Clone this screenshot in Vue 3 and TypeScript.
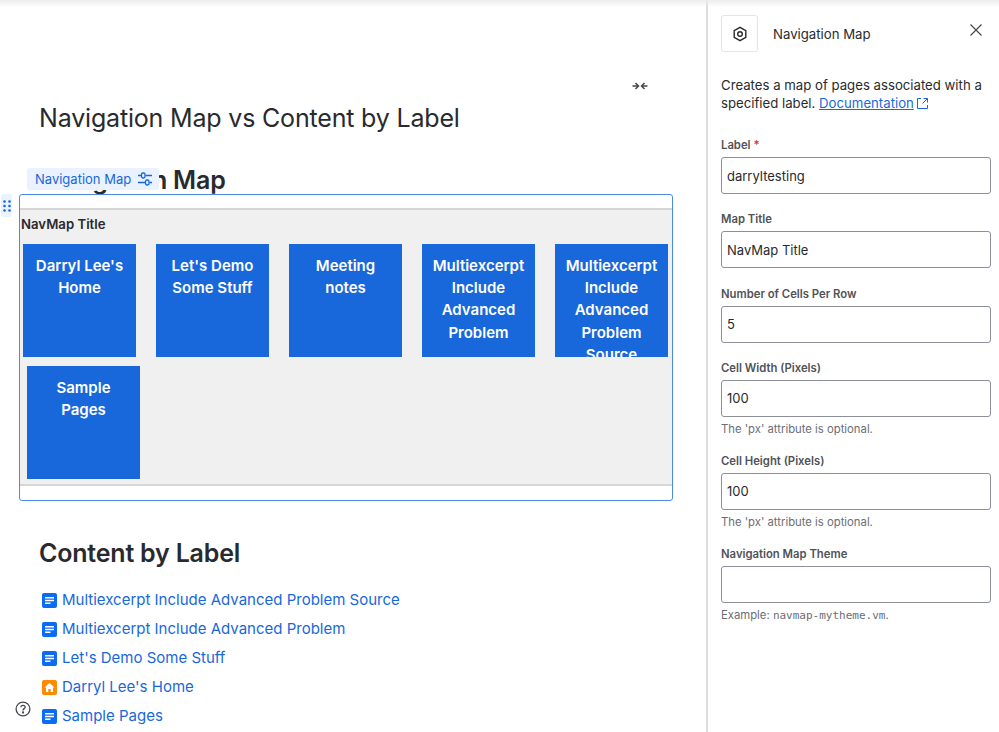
<template>
  <div class="page">
    <main class="content">
      <div class="width-row">
        <button class="icon-btn" aria-label="Collapse width">
          <svg width="16" height="10" viewBox="0 0 16 10" fill="none" stroke="#44494f" stroke-width="1.5">
            <path d="M0.5 5H6M3.5 2L6.5 5L3.5 8M15.5 5H10M12.5 2L9.5 5L12.5 8" />
          </svg>
        </button>
      </div>
      <h1>Navigation Map vs Content by Label</h1>
      <h2 class="map-heading">Navigation Map</h2>

      <section class="macro">
        <div class="macro-toolbar">
          <span>Navigation Map</span>
          <svg width="16" height="14" viewBox="0 0 16 14" fill="none" stroke="#1868db" stroke-width="1.3">
            <path d="M1 3.5H4.5M8.5 3.5H15M1 10.5H8.5M12.5 10.5H15" />
            <rect x="4.5" y="1" width="3.5" height="5" rx="1.4" />
            <rect x="8.5" y="8" width="3.5" height="5" rx="1.4" />
          </svg>
        </div>
        <div class="drag-handle">
          <svg width="8" height="12" viewBox="0 0 8 12" fill="#1868db">
            <circle v-for="d in dots" :key="d.id" :cx="d.x" :cy="d.y" r="1.3" />
          </svg>
        </div>
        <div class="map">
          <div class="map-title">NavMap Title</div>
          <div v-for="(row, i) in rows" :key="i" class="cell-row" :class="{ second: i === 1 }">
            <a v-for="cell in row" :key="cell" class="cell">{{ cell }}</a>
          </div>
        </div>
      </section>

      <h2 class="label-heading">Content by Label</h2>
      <ul class="pages">
        <li v-for="p in pages" :key="p.title">
          <svg v-if="p.home" width="15" height="15" viewBox="0 0 15 15">
            <rect width="15" height="15" rx="2" fill="#ff8b00" />
            <path d="M7.5 3L12.5 7.6H11V12H8.7V9H6.3V12H4V7.6H2.5Z" fill="#fff" />
          </svg>
          <svg v-else width="15" height="15" viewBox="0 0 15 15">
            <rect width="15" height="15" rx="2" fill="#0b6bf5" />
            <path d="M3 4H12V5.4H3ZM3 6.8H12V8.2H3ZM3 9.6H8.5V11H3Z" fill="#fff" />
          </svg>
          <a>{{ p.title }}</a>
        </li>
      </ul>
      <div class="help">
        <svg width="16" height="16" viewBox="0 0 16 16" fill="none" stroke="#44494f" stroke-width="1.3">
          <circle cx="8" cy="8" r="6.9" />
          <path d="M5.9 6.3C5.9 5 6.9 4.3 8 4.3C9.2 4.3 10.1 5.1 10.1 6.2C10.1 7.6 8 7.7 8 9.4" />
          <circle cx="8" cy="11.5" r="0.5" fill="#44494f" />
        </svg>
      </div>
    </main>

    <aside class="panel">
      <header class="panel-head">
        <div class="macro-icon">
          <svg width="16" height="16" viewBox="0 0 16 16" fill="none" stroke="#292a2e" stroke-width="1.4">
            <path d="M8 1.3L13.8 4.6V11.4L8 14.7L2.2 11.4V4.6Z" stroke-linejoin="round" />
            <circle cx="8" cy="8" r="2.3" />
          </svg>
        </div>
        <span class="panel-title">Navigation Map</span>
        <button class="close" aria-label="Close">
          <svg width="12" height="12" viewBox="0 0 12 12" stroke="#44494f" stroke-width="1.2">
            <path d="M0.5 0.5L11.5 11.5M11.5 0.5L0.5 11.5" />
          </svg>
        </button>
      </header>
      <p class="desc">
        Creates a map of pages associated with a specified label.
        <a class="doc">Documentation</a>
        <svg class="ext" width="13" height="13" viewBox="0 0 13 13" fill="none" stroke="#1868db" stroke-width="1">
          <path d="M5 1.5H1.5V11.5H11.5V8M7.5 1.5H11.5V5.5M11.5 1.5L6.5 6.5" />
        </svg>
      </p>
      <div v-for="f in fields" :key="f.label" class="field">
        <label>{{ f.label }}<span v-if="f.required" class="req">*</span></label>
        <input type="text" :value="f.value" />
        <p v-if="f.help" class="help-text">{{ f.help }}</p>
        <p v-if="f.mono" class="help-text">Example: <code>navmap-mytheme.vm</code>.</p>
      </div>
    </aside>
  </div>
</template>

<script setup lang="ts">
interface Field {
  label: string
  value: string
  required?: boolean
  help?: string
  mono?: boolean
}

const rows: string[][] = [
  [
    "Darryl Lee's Home",
    "Let's Demo Some Stuff",
    'Meeting notes',
    'Multiexcerpt Include Advanced Problem',
    'Multiexcerpt Include Advanced Problem Source',
  ],
  ['Sample Pages'],
]

const pages = [
  { title: 'Multiexcerpt Include Advanced Problem Source' },
  { title: 'Multiexcerpt Include Advanced Problem' },
  { title: "Let's Demo Some Stuff" },
  { title: "Darryl Lee's Home", home: true },
  { title: 'Sample Pages' },
]

const pxHelp = "The 'px' attribute is optional."

const fields: Field[] = [
  { label: 'Label', value: 'darryltesting', required: true },
  { label: 'Map Title', value: 'NavMap Title' },
  { label: 'Number of Cells Per Row', value: '5' },
  { label: 'Cell Width (Pixels)', value: '100', help: pxHelp },
  { label: 'Cell Height (Pixels)', value: '100', help: pxHelp },
  { label: 'Navigation Map Theme', value: '', mono: true },
]

const dots = [0, 1, 2].flatMap((r) =>
  [0, 1].map((c) => ({ id: `${r}-${c}`, x: 1.5 + c * 5, y: 1.5 + r * 4.5 })),
)
</script>

<style scoped>
.page {
  display: flex;
  height: 732px;
  overflow: hidden;
  position: relative;
  font-family: Inter, 'Liberation Sans', sans-serif;
  color: #292a2e;
}

.page::before {
  content: '';
  position: absolute;
  inset: 0 0 auto 0;
  height: 7px;
  background: linear-gradient(#ececec, #ffffff00);
  z-index: 5;
}

.content {
  width: 706px;
  flex: none;
  position: relative;
  padding: 0 34px 0 39px;
  box-sizing: border-box;
}

.width-row {
  display: flex;
  justify-content: flex-end;
  padding-top: 78px;
  height: 16px;
}

.icon-btn {
  border: 0;
  background: none;
  padding: 0;
  margin-right: 24px;
  height: 16px;
  display: flex;
  align-items: center;
}

h1 {
  margin: 7px 0 0;
  font-size: 25px;
  line-height: 34px;
  font-weight: 400;
  letter-spacing: -0.18px;
}

h2 {
  margin: 0;
  font-size: 25px;
  line-height: 30px;
  font-weight: 600;
  letter-spacing: -0.2px;
}

.map-heading {
  margin-top: 30px;
}

.macro {
  position: relative;
  margin: -1px -1px 0 -20px;
  height: 307px;
  box-sizing: border-box;
  border: 1px solid #4c8bea;
  border-radius: 3px;
  padding: 13px 0 14px;
  background: #fff;
}

.macro-toolbar {
  position: absolute;
  top: -27px;
  left: 7px;
  height: 22px;
  display: flex;
  align-items: center;
  gap: 6px;
  padding: 0 6px 0 8px;
  background: #e9f2fe;
  border-radius: 3px;
  font-size: 13px;
  color: #1868db;
}

.drag-handle {
  position: absolute;
  left: -19px;
  top: -1px;
  width: 11px;
  height: 23px;
  background: #e9f2fe;
  border-radius: 3px;
  display: flex;
  align-items: center;
  justify-content: center;
}

.map {
  height: 278px;
  box-sizing: border-box;
  background: #f0f0f0;
  border-top: 2px solid #d6d6d6;
  border-bottom: 2px solid #d6d6d6;
  padding: 6px 1px;
}

.map-title {
  font-size: 13.2px;
  font-weight: 600;
  line-height: 17px;
  margin-bottom: 11px;
}

.cell-row {
  display: flex;
  gap: 20px;
  padding-left: 2px;
}

.cell-row.second {
  padding-left: 6px;
  margin-top: 9px;
}

.cell {
  width: 113px;
  height: 113px;
  flex: none;
  box-sizing: border-box;
  padding: 10.5px 8px 0;
  background: #1868db;
  color: #fff;
  font-size: 15px;
  line-height: 22.4px;
  font-weight: 600;
  text-align: center;
  overflow: hidden;
}

.label-heading {
  margin-top: 37px;
}

.pages {
  list-style: none;
  margin: 19px 0 0 3px;
  padding: 0;
  display: flex;
  flex-direction: column;
  gap: 5px;
}

.pages li {
  display: flex;
  align-items: center;
  gap: 5px;
  height: 24px;
  font-size: 15px;
  color: #1868db;
}

.pages svg {
  flex: none;
  margin-top: 2px;
}

.help {
  position: absolute;
  left: 15px;
  top: 701px;
  line-height: 0;
}

.panel {
  flex: 1;
  box-sizing: border-box;
  border-left: 2px solid #dcdcdc;
  padding: 15px 8px 0 13px;
  min-width: 0;
  font-size: 13.2px;
}

.panel-head {
  display: flex;
  align-items: center;
  height: 37px;
}

.macro-icon {
  width: 37px;
  height: 37px;
  box-sizing: border-box;
  border: 1px solid #e4e5e7;
  border-radius: 3px;
  display: flex;
  align-items: center;
  justify-content: center;
}

.panel-title {
  margin-left: 15px;
  font-size: 13.2px;
}

.close {
  margin-left: auto;
  margin-right: 9px;
  margin-top: -7px;
  border: 0;
  background: none;
  padding: 0;
  display: flex;
}

.desc {
  margin: 24px 0 26px;
  line-height: 18px;
  font-size: 13.2px;
}

.doc {
  color: #1868db;
  text-decoration: underline;
}

.ext {
  margin-left: 2px;
  vertical-align: -2px;
}

.field {
  margin-top: 18.33px;
}

.field label {
  display: block;
  font-size: 11.3px;
  line-height: 14px;
  font-weight: 600;
  color: #505258;
  margin-bottom: 5px;
}

.req {
  color: #c9372c;
  margin-left: 3px;
}

.field input {
  display: block;
  width: 100%;
  height: 37px;
  box-sizing: border-box;
  border: 1px solid #8c8f97;
  border-radius: 3px;
  padding: 0 5px;
  font: 13px Inter, 'Liberation Sans', sans-serif;
  color: #292a2e;
  outline: none;
}

.help-text {
  margin: 4.67px 0 0;
  font-size: 11.3px;
  line-height: 14px;
  color: #6b6e76;
}

code {
  font-family: 'DejaVu Sans Mono', 'Liberation Mono', monospace;
  font-size: 11px;
}
</style>

<style>
html,
body {
  margin: 0;
  overflow: hidden;
  background: #fff;
}
</style>
